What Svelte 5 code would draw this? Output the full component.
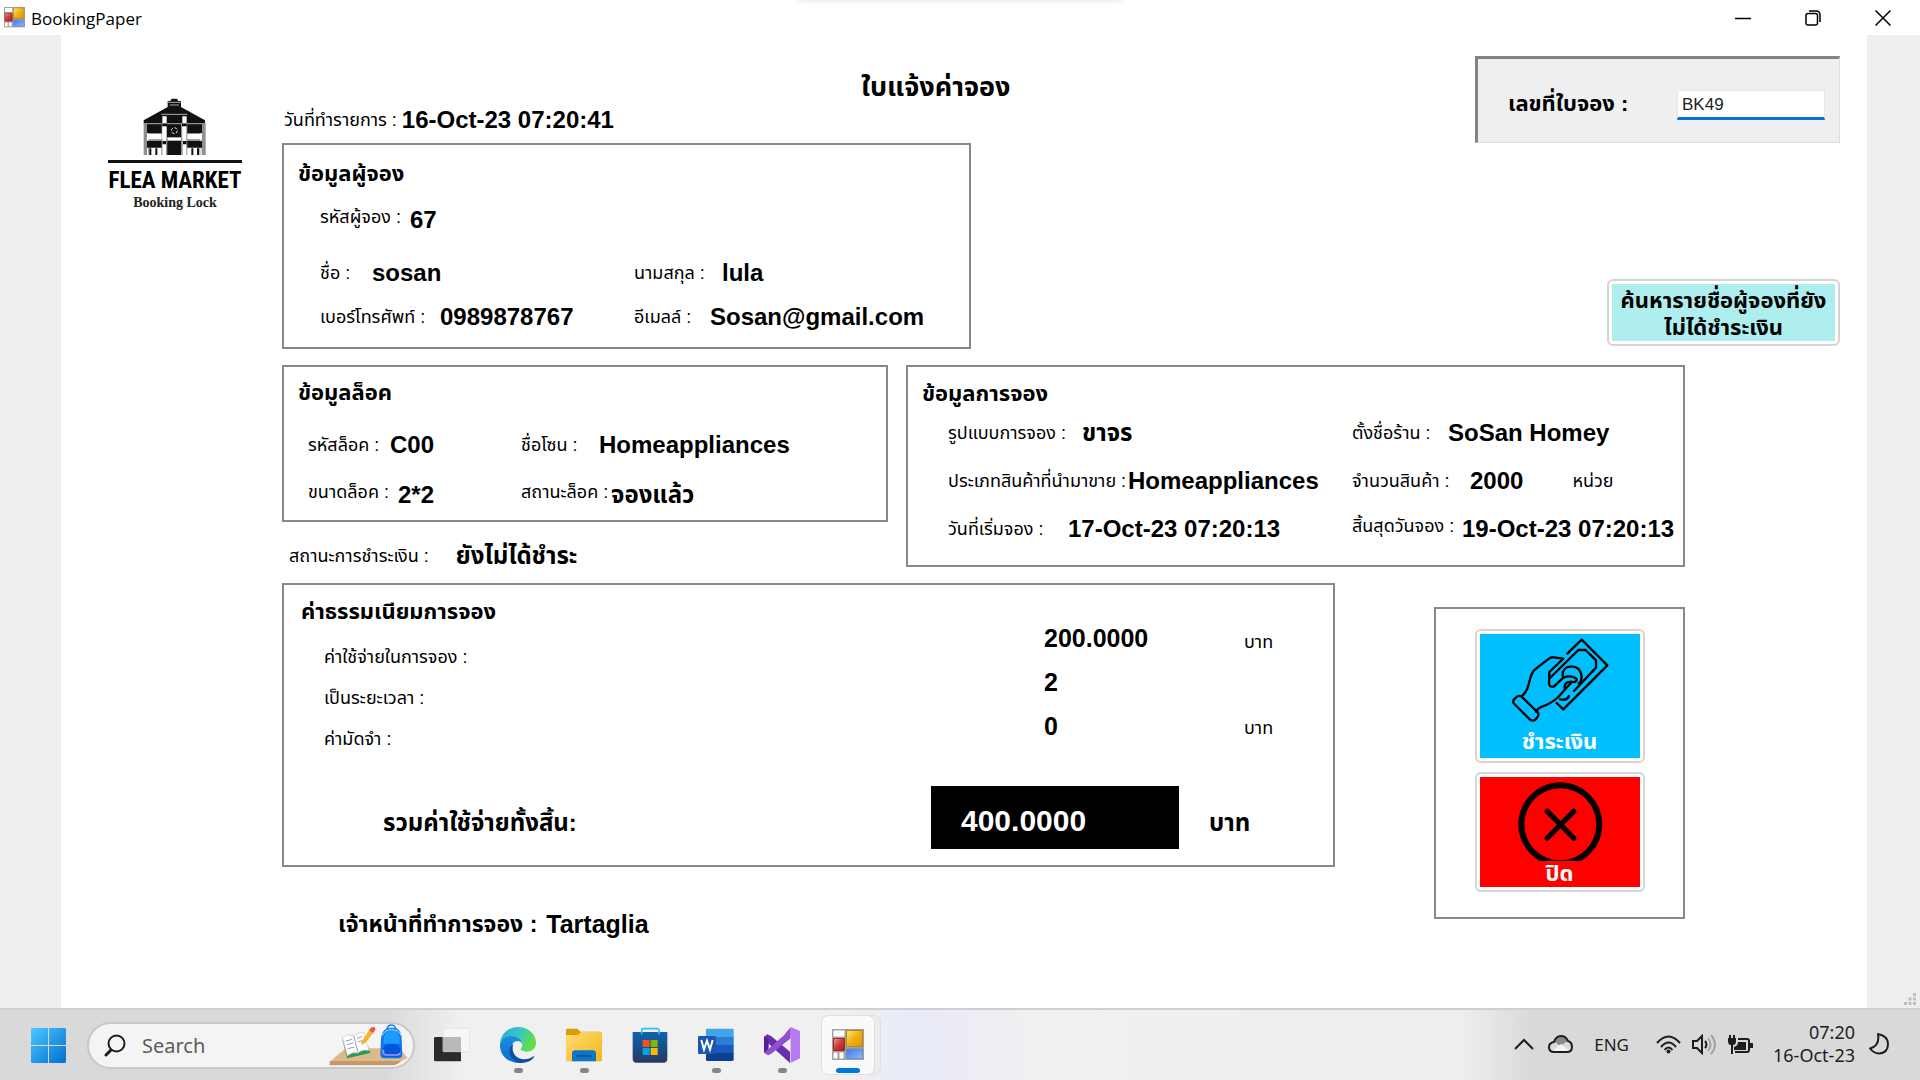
<script>
  const customer = [
    [{ label: 'รหัสผู้จอง :', value: '67', w: 'w90', lift: true }],
    [{ label: 'ชื่อ :', value: 'sosan', w: 'w52' }, { label: 'นามสกุล :', value: 'lula', w: 'w88' }],
    [{ label: 'เบอร์โทรศัพท์ :', value: '0989878767', w: 'w120' }, { label: 'อีเมลล์ :', value: 'Sosan@gmail.com', w: 'w76' }]
  ];
  const lock = [
    [{ label: 'รหัสล็อค :', value: 'C00', w: 'w82' }, { label: 'ชื่อโซน :', value: 'Homeappliances', w: 'w78' }],
    [{ label: 'ขนาดล็อค :', value: '2*2', w: 'w90', lift: true }, { label: 'สถานะล็อค :', value: 'จองแล้ว', w: 'w90', lift: true }]
  ];
  const booking = [
    [{ label: 'รูปแบบการจอง :', value: 'ขาจร', w: 'w134' }, { label: 'ตั้งชื่อร้าน :', value: 'SoSan Homey', w: 'w96' }],
    [{ label: 'ประเภทสินค้าที่นำมาขาย :', value: 'Homeappliances', w: 'w180' }, { label: 'จำนวนสินค้า :', value: '2000', w: 'w118', unit: 'หน่วย' }],
    [{ label: 'วันที่เริ่มจอง :', value: '17-Oct-23 07:20:13', w: 'w120' }, { label: 'สิ้นสุดวันจอง :', value: '19-Oct-23 07:20:13', w: 'w110', lift: true }]
  ];
  const feeLabels = ['ค่าใช้จ่ายในการจอง :', 'เป็นระยะเวลา :', 'ค่ามัดจำ :'];
  const feeValues = ['200.0000', '2', '0'];
  const feeUnits = ['บาท', '', 'บาท'];
  let slip = $state('BK49');
</script>

{#snippet formsIcon(size)}
  <svg width={size} height={size} viewBox="0 0 32 32" aria-hidden="true">
    <defs>
      <linearGradient id="fy{size}" x1="0" y1="0" x2="1" y2="1"><stop offset="0" stop-color="#ffe58a" /><stop offset=".5" stop-color="#eeb010" /><stop offset="1" stop-color="#d99a00" /></linearGradient>
      <linearGradient id="fr{size}" x1="0" y1="0" x2="1" y2="1"><stop offset="0" stop-color="#f0a09a" /><stop offset=".5" stop-color="#cc3a36" /><stop offset="1" stop-color="#a81c1c" /></linearGradient>
      <linearGradient id="fb{size}" x1="0" y1="0" x2="1" y2="1"><stop offset="0" stop-color="#3f78e8" /><stop offset="1" stop-color="#8fb8ff" /></linearGradient>
    </defs>
    <path fill="#a2a2a2" d="M0 0h32v31H0z" />
    <path fill="#fff" d="M1.500 1.500h11v6h-11zM1.500 23.500h4v6h-4zM7.500 23.500h4v6h-4z" />
    <path fill="url(#fy{size})" stroke="#b58716" d="M14.500 1.500h16v16h-16z" />
    <path fill="url(#fr{size})" stroke="#9a2a2a" d="M1.500 9.500h11v12h-11z" />
    <path fill="url(#fb{size})" stroke="#6d8fd0" d="M14.500 20h16v9.500h-16z" />
  </svg>
{/snippet}

{#snippet fields(rows)}
  {#each rows as row}
    <div class="pair">
      {#each row as f}
        <dl class="field" class:lift={f.lift}>
          <dt class={f.w}>{f.label}</dt>
          <dd>{f.value}</dd>
          {#if f.unit}<dd class="unit">{f.unit}</dd>{/if}
        </dl>
      {/each}
    </div>
  {/each}
{/snippet}

<div class="screen">
  <div class="flyout"></div>
  <header class="titlebar">
    {@render formsIcon(21)}
    <span class="caption">BookingPaper</span>
    <div class="winbtns">
      <button aria-label="Minimize"><svg width="16" height="16" viewBox="0 0 16 16"><path d="M0 8.500h16" /></svg></button>
      <button aria-label="Restore"><svg width="16" height="16" viewBox="0 0 16 16"><rect x="1" y="3.500" width="11.500" height="11.500" rx="2" /><path d="M4 1h7.500a3.500 3.500 0 0 1 3.500 3.500V12" /></svg></button>
      <button aria-label="Close"><svg width="16" height="16" viewBox="0 0 16 16"><path d="M.5.5l15 15M15.500.5l-15 15" /></svg></button>
    </div>
  </header>

  <main class="client">
    <div class="form">
      <div class="logo">
        <svg width="64" height="60" viewBox="160 52 192 176" aria-hidden="true">
          <path fill="#111" d="M234 62h8l4-7h16l4 7h8v18l72 40v8H162v-8l72-40z" />
          <path stroke="#aaa" stroke-width="3" fill="none" d="M234 66h40M240 74h28M215 102h78" />
          <path fill="#8f8f8f" d="M162 128h186v96h-12v-78h-4v78h-3v-24h-36v24h-4v-90h-10v90h-50v-90h-10v90h-4v-24h-36v24h-3v-78h-4v78h-10z" />
          <path fill="#111" d="M172 132h44v26h-44zM293 132h44v26h-44zM232 132h42v38h-42zM172 182h44v20h-44zM293 182h44v20h-44zM233 182h41v42h-41zM218 130h14v8h-14zM277 130h14v8h-14zM219 182h10v10h-10zM280 182h10v10h-10z" />
          <path fill="#fff" d="M218 108h13v20h-13zM278 108h13v20h-13zM218 140h12v40h-12zM278 140h12v40h-12zM172 161h44v16h-44zM293 161h44v16h-44zM234 172h40v8h-40zM219 194h10v32h-10zM280 194h10v32h-10z" />
          <path stroke="#111" stroke-width="6" d="M182 204v20M200 204v20M308 204v20M325 204v20" />
          <path stroke="#fff" stroke-width="6" d="M191 206v20M209 206v20M299 206v20M317 206v20" />
          <circle cx="254" cy="151" r="9" fill="none" stroke="#ddd" stroke-width="3" stroke-dasharray="9 5" />
        </svg>
        <span class="brand">FLEA MARKET</span>
        <span class="tag">Booking Lock</span>
      </div>

      <div class="content">
        <div class="top">
          <dl class="field made"><dt>วันที่ทำรายการ :</dt><dd>16-Oct-23 07:20:41</dd></dl>
          <h1>ใบแจ้งค่าจอง</h1>
          <div class="slip">
            <label for="slip">เลขที่ใบจอง :</label>
            <input id="slip" type="text" bind:value={slip} />
          </div>
        </div>

        <div class="people">
          <section class="box customer">
            <h2>ข้อมูลผู้จอง</h2>
            {@render fields(customer)}
          </section>
          <button class="raised find"><span>ค้นหารายชื่อผู้จองที่ยัง<br />ไม่ได้ชำระเงิน</span></button>
        </div>

        <div class="details">
          <div>
            <section class="box lock">
              <h2>ข้อมูลล็อค</h2>
              {@render fields(lock)}
            </section>
            <dl class="field status"><dt>สถานะการชำระเงิน :</dt><dd>ยังไม่ได้ชำระ</dd></dl>
          </div>
          <section class="box booking">
            <h2>ข้อมูลการจอง</h2>
            {@render fields(booking)}
          </section>
        </div>

        <div class="bottom">
          <div>
            <section class="box fees">
              <h2>ค่าธรรมเนียมการจอง</h2>
              <div class="feegrid">
                <div class="feelabels">{#each feeLabels as t}<span>{t}</span>{/each}</div>
                <div class="feevalues">{#each feeValues as t}<span>{t}</span>{/each}</div>
                <div class="feeunits">{#each feeUnits as t}<span>{t}</span>{/each}</div>
              </div>
              <div class="total">
                <span class="sum">รวมค่าใช้จ่ายทั้งสิ้น:</span>
                <output>400.0000</output>
                <span>บาท</span>
              </div>
            </section>
            <dl class="field officer"><dt>เจ้าหน้าที่ทำการจอง :</dt><dd>Tartaglia</dd></dl>
          </div>
          <section class="box actions">
            <button class="raised pay">
              <span>
                <svg width="100" height="87" viewBox="270 145 300 261" aria-hidden="true">
                  <g fill="none" stroke="#000" stroke-width="7" stroke-linecap="round" stroke-linejoin="round">
                    <path d="M283 331l8-7q8-5 15 1l46 45q6 7 1 14l-7 9q-8 6-16 0l-47-47q-7-8 0-15z" />
                    <path d="M306 322C326 304 324 290 332 265q5-18 16-25l36-28q9-7 17-6l29 4-42 40-1 35q3 13 15 8l28-26q14-6 26-3 18 4 13 13-3 4-14 3l-40 45q-21 19-39 25-23 7-28 19" />
                    <path d="M442 195l43-42 77 77-132 132-20-19" />
                    <path d="M390 268l85-84h22l31 31v22l-66 70" />
                    <path d="M428 262q-2-27 25-29 28 0 32 29 0 17-9 23" />
                    <path d="M434 299q-3-20 20-20M420 332q22 4 27-10" />
                  </g>
                </svg>
                ชำระเงิน
              </span>
            </button>
            <button class="raised close">
              <span>
                <svg width="86" height="79" viewBox="290 575 258 237" aria-hidden="true">
                  <circle cx="420" cy="702" r="117" fill="none" stroke="#000" stroke-width="18" />
                  <path stroke="#000" stroke-width="16" stroke-linecap="round" d="M381 663l79 80M460 663l-79 80" />
                </svg>
                ปิด
              </span>
            </button>
          </section>
        </div>
      </div>
    </div>
    <svg class="grip" width="13" height="13" viewBox="0 0 13 13" aria-hidden="true"><path fill="#bdbdbd" d="M9 0h3v3H9zM4.500 4.500h3v3h-3zM9 4.500h3v3H9zM0 9h3v3H0zM4.500 9h3v3h-3zM9 9h3v3H9z" /></svg>
  </main>

  <footer class="taskbar">
    <button class="start" aria-label="Start">
      <svg width="35" height="35" viewBox="0 0 35 35">
        <defs><linearGradient id="win" x1="0" y1="0" x2="1" y2="1" gradientUnits="objectBoundingBox"><stop offset="0" stop-color="#4cc8ff" /><stop offset="1" stop-color="#0070d0" /></linearGradient></defs>
        <path fill="url(#win)" d="M1 0h16v17H0V1zM18 0h16l1 1v16H18zM0 18h17v17H1l-1-1zM18 18h17v16l-1 1H18z" />
      </svg>
    </button>
    <label class="search">
      <svg width="22" height="23" viewBox="0 0 22 23"><circle cx="12.500" cy="9.500" r="8" fill="none" stroke="#1d1d1d" stroke-width="2" /><path stroke="#1d1d1d" stroke-width="3" stroke-linecap="round" d="M2 21l5-5" /></svg>
      <input type="text" placeholder="Search" aria-label="Search" />
      <svg class="scene" width="80" height="44" viewBox="0 0 240 132" aria-hidden="true">
        <path fill="#deb98c" d="M50 76h160l26 28-22 12H2z" />
        <path fill="#c49a6c" d="M2 114h214q-8 12-28 13H2z" />
        <path fill="#2f9a4e" d="M40 48l14 58 70-16-6-18z" />
        <path fill="#fff" stroke="#c9c9d5" stroke-width="2" d="M40 42q20-10 34-4 14-12 30-10l16 54q-22-4-33 8-16-5-32 8z" />
        <path stroke="#9c9cb8" stroke-width="3" fill="none" d="M50 54l20-5M53 65l20-5M56 77l20-5M84 46l16-5M87 57l16-5M74 38l13 50" />
        <path fill="#f7b52c" d="M98 56l22-34 12 9-24 30-12 5z" /><path fill="#ef5545" d="M120 22l7-9 9-1 4 7-8 12z" />
        <path fill="none" stroke="#1b86ec" stroke-width="5" d="M174 20q2-14 13-14t14 14" />
        <path fill="#0b78f0" d="M156 48q2-34 32-34t30 34l2 46q0 12-12 12h-42q-12 0-12-12z" />
        <path fill="#1b9bff" d="M164 44q3-22 24-22 22 0 24 22v18h-48z" />
        <path fill="#0057d8" d="M162 76q2-14 26-14 23 0 25 14v20q0 5-6 5h-38q-7 0-7-5z" />
        <path stroke="#b58cff" stroke-width="5" fill="none" d="M163 80v10q2 6 8 6h34q6 0 7-6" />
        <path stroke="#bde0ff" stroke-width="3" fill="none" d="M159 38q8-18 29-18t29 18" />
      </svg>
    </label>
    <nav class="apps">
      <button aria-label="Task view">
        <svg width="36" height="36" viewBox="0 0 108 108"><path fill="#2b2b2a" d="M3 30h78v73H5q-5 0-5-5V33z" /><rect x="27" y="4" width="80" height="70" rx="3" fill="#f6f6f6" stroke="#dcdcdc" stroke-width="2" /><path fill="#b9b9b9" d="M27 30h54v44H27z" /></svg>
      </button>
      <button aria-label="Edge" class="open">
        <svg width="36" height="36" viewBox="0 0 108 108">
          <defs>
            <linearGradient id="e1" x1="0" y1="0" x2="1" y2=".4"><stop offset="0" stop-color="#2aa6e8" /><stop offset=".55" stop-color="#3ac8c0" /><stop offset="1" stop-color="#63de4a" /></linearGradient>
            <linearGradient id="e2" x1="0" y1="0" x2="0" y2="1"><stop offset="0" stop-color="#1b90dc" /><stop offset="1" stop-color="#0a6cd0" /></linearGradient>
          </defs>
          <path fill="url(#e1)" d="M0 50C2 20 26 0 54 0c32 0 54 22 54 47 0 18-14 27-28 27-12 0-18-4-18-7s5-6 5-15c0-14-18-24-34-24C18 28 4 36 0 50z" />
          <path fill="url(#e2)" d="M0 52c4-18 18-25 33-25 18 0 33 10 34 24-3-6-8-9-14-9-12 0-19 10-19 24 0 20 16 36 34 41-38 6-70-20-68-55z" />
          <path fill="#104f9c" d="M40 51c-8 22 6 46 34 46 10 0 18-4 26-9 2-1 3 1 2 3-8 11-22 17-38 17-20-2-36-18-36-36 0-10 5-17 12-21z" />
        </svg>
      </button>
      <button aria-label="File Explorer" class="open">
        <svg width="36" height="36" viewBox="0 0 108 108">
          <defs><linearGradient id="fo" x1="0" y1="0" x2="1" y2="1"><stop offset="0" stop-color="#ffdc72" /><stop offset="1" stop-color="#f5b51c" /></linearGradient></defs>
          <path fill="#dc9c07" d="M0 9q0-4 4-4h30l10 9h60q4 0 4 4v20H0z" /><path fill="url(#fo)" d="M0 24h36l10-9h62v84q0 4-4 4H4q-4 0-4-4z" />
          <path fill="#0f73c6" d="M18 103V80q0-10 10-10h52q10 0 10 10v23z" /><path stroke="#0a4b8f" stroke-width="5" stroke-linecap="round" d="M34 87h40" />
        </svg>
      </button>
      <button aria-label="Store">
        <svg width="36" height="36" viewBox="0 0 108 108">
          <defs><linearGradient id="st" x1="0" y1="0" x2="0" y2="1"><stop offset="0" stop-color="#0f63b0" /><stop offset="1" stop-color="#243a60" /></linearGradient></defs>
          <path fill="url(#st)" d="M2 15h104v80q0 12-12 12H14Q2 107 2 95z" /><path fill="none" stroke="#2cc0f4" stroke-width="5" d="M29 22V10q0-5 5-5h42q5 0 5 5v12" />
          <path fill="#f25022" d="M32 39h21v21H32z" /><path fill="#7fba00" d="M56 39h21v21H56z" /><path fill="#00a4ef" d="M32 63h21v21H32z" /><path fill="#ffb900" d="M56 63h21v21H56z" />
        </svg>
      </button>
      <button aria-label="Word" class="open">
        <svg width="36" height="36" viewBox="0 0 108 108">
          <path fill="#41a5ee" d="M24 30V9q0-4 4-4h75q4 0 4 4v21z" /><path fill="#2b7cd3" d="M24 30h83v24H24z" /><path fill="#185abd" d="M24 54h83v24H24z" /><path fill="#103f91" d="M24 78h83v20q0 4-4 4H28q-4 0-4-4z" />
          <rect y="27" width="54" height="54" rx="4" fill="#1b56b4" />
          <path fill="none" stroke="#fff" stroke-width="6" d="M10 39l8 29 9-27 9 27 8-29" />
        </svg>
      </button>
      <button aria-label="Visual Studio" class="open">
        <svg width="36" height="36" viewBox="0 0 108 108">
          <path fill="#6a2fb0" d="M0 29l10-7 12 6 56 46v34L14 50v-2l-2 34-12-6z" />
          <path fill="#52218f" d="M0 29l13 6v42L0 76z" />
          <path fill="#8f4fd0" d="M0 77l60-52L80 0v34L22 80l-10 5z" />
          <path fill="#b57bee" d="M80 0l28 12v82L80 108z" />
        </svg>
      </button>
      <button aria-label="BookingPaper" class="open active">{@render formsIcon(32)}</button>
    </nav>
    <div class="tray">
      <svg width="20" height="12" viewBox="0 0 20 12"><path fill="none" stroke="#1d1d1d" stroke-width="2" d="M1 11l9-9 9 9" /></svg>
      <svg class="cloud" width="25" height="18" viewBox="0 0 25 18"><path fill="#8b8b8b" d="M6 6q2-5 7-5 5 0 7 5l-8 5z" /><path fill="#f3f3f3" d="M4 16l9-7 9 7z" /><path fill="none" stroke="#1d1d1d" stroke-width="2" d="M6 17q-5 0-5-5 0-4 5-5 2-6 7-6 5 0 7 5 4 1 4 6 0 5-5 5z" /></svg>
      <span class="lang">ENG</span>
      <svg width="25" height="19" viewBox="0 0 25 19"><g fill="none" stroke="#1d1d1d" stroke-width="2"><path d="M1 8q11.500-13 23 0M5 12q7.500-9 15 0M8.500 15q4-5 8 0" /></g><circle cx="12.500" cy="16.500" r="2" fill="#1d1d1d" /></svg>
      <svg class="sound" width="25" height="21" viewBox="0 0 25 21"><path fill="none" stroke="#1d1d1d" stroke-width="2" d="M1 7h4l5-5v17l-5-5H1zM13 7q3 3.500 0 7" /><path fill="none" stroke="#a5a5a5" stroke-width="2" d="M16 4q5 6.500 0 13M19 1q8 9.500 0 19" /></svg>
      <svg class="battery" width="25" height="19" viewBox="0 0 25 19"><path fill="none" stroke="#1d1d1d" stroke-width="2" d="M10 4h9q2 0 2 2v9q0 2-2 2H7" /><path fill="#1d1d1d" d="M10 7h8v8H6v-3q4-1 4-5zM22 8h3v5h-3zM0 3h8v3q0 4-3 4v9H3v-9Q0 10 0 6zM1 0h2v3H1zM5 0h2v3H5z" /></svg>
      <time>07:20<br />16-Oct-23</time>
      <svg width="20" height="22" viewBox="0 0 20 22"><path fill="none" stroke="#1d1d1d" stroke-width="2" stroke-linejoin="round" d="M9 1q10 2 10 10 0 9-9 9.500-5 0-9-5Q11 13 9 1z" /></svg>
    </div>
  </footer>
</div>

<style>
  :global(body) { margin: 0; }
  .screen { position: relative; min-height: 100vh; display: flex; flex-direction: column; background: #fff; color: #000; font-family: "Liberation Sans", "Noto Sans Thai", "Noto Sans", sans-serif; overflow: hidden; }
  h1, h2, dl, dd { margin: 0; }
  button { border: 0; padding: 0; background: none; font: inherit; color: inherit; }
  svg { display: block; flex: none; }
  .flyout { position: absolute; top: -10px; left: 50%; width: 328px; margin-left: -164px; height: 10px; border-radius: 8px; box-shadow: 0 0 6px #00000022; }

  .titlebar { height: 35px; display: flex; align-items: center; padding: 0 2px 0 4px; }
  .caption { margin-left: 6px; padding-top: 2px; font: 17px "Open Sans", "Noto Sans", sans-serif; }
  .winbtns { margin-left: auto; display: flex; }
  .winbtns button { width: 70px; height: 33px; display: grid; place-items: center; }
  .winbtns svg { fill: none; stroke: #000; stroke-width: 1.500; }

  .client { flex: 1; display: flex; position: relative; background: #efefef; padding: 0 53px 0 61px; }
  .grip { position: absolute; right: 3px; bottom: 2px; }
  .form { flex: 1; min-width: 0; display: flex; background: #fff; padding: 21px 27px 0 47px; }
  .logo { width: 134px; flex: none; padding-top: 41px; display: flex; flex-direction: column; align-items: center; }
  .brand { margin-top: 3px; width: 134px; border-top: 3px solid #111; padding-top: 4px; text-align: center; font: bold 23px/27px "Liberation Sans Narrow", "Roboto Condensed", sans-serif; white-space: nowrap; }
  .tag { font: bold 14px/18px "Liberation Serif", serif; color: #222; }
  .content { flex: 1; min-width: 0; margin-left: 40px; display: flex; flex-direction: column; }

  .top { display: grid; grid-template-columns: 579px 1fr 365px; }
  .made { align-self: end; height: 46px; padding-left: 2px; }
  .made dt { margin-right: 5px; }
  h1 { font-size: 27px; line-height: 34px; padding-top: 14px; white-space: nowrap; }
  .slip { height: 87px; box-sizing: border-box; background: #efefef; border: 1px solid #dedede; border-top: 3px solid #838383; border-left: 3px solid #838383; display: flex; align-items: center; justify-content: space-between; padding: 8px 14px 0 30px; font-weight: bold; font-size: 22px; }
  .slip input { width: 148px; height: 30px; box-sizing: border-box; border: 1px solid #e5e5e5; border-bottom: 3px solid #0a6fd0; padding: 2px 4px 0; background: #fff; font: 17px "Liberation Sans", sans-serif; color: #222; outline: 0; }

  .box { box-sizing: border-box; border: 2px solid #888; }
  h2 { font-size: 22px; line-height: 30px; white-space: nowrap; }
  .pair { display: grid; align-items: center; }
  .field { display: flex; align-items: center; white-space: nowrap; }
  .field.lift { align-items: flex-start; }
  dt { flex: none; font-size: 18px; line-height: 22px; }
  dd { font-size: 24px; line-height: 28px; font-weight: bold; }
  dd.unit { margin-left: 49px; font-size: 18px; font-weight: normal; }
  .w52 { width: 52px; } .w76 { width: 76px; } .w78 { width: 78px; } .w82 { width: 82px; } .w88 { width: 88px; } .w90 { width: 90px; }
  .w96 { width: 96px; } .w110 { width: 110px; } .w118 { width: 118px; } .w120 { width: 120px; } .w134 { width: 134px; } .w180 { width: 180px; }

  .people { display: flex; justify-content: space-between; align-items: flex-end; }
  .customer { width: 689px; height: 206px; padding: 14px 0 0 14px; }
  .customer .pair { grid-template-columns: 314px 1fr; height: 44px; padding-left: 22px; }
  .customer .pair:nth-of-type(1) { height: 62px; }
  .raised { background: #fff; border: 2px solid #d4d4d4; border-radius: 6px; padding: 3px; }
  .raised > span { display: flex; flex-direction: column; align-items: center; justify-content: center; gap: 5px; box-sizing: border-box; width: 100%; height: 100%; font-weight: bold; }
  .find { width: 233px; height: 67px; margin-bottom: 3px; font-size: 22px; line-height: 27px; }
  .find > span { display: block; padding-top: 3px; background: #aeeeee; text-align: center; white-space: nowrap; }

  .details { display: grid; grid-template-columns: 606fr 779fr; gap: 18px; margin: 16px 155px 0 0; }
  .lock { height: 157px; padding: 11px 0 0 14px; }
  .lock h2 { margin-bottom: 12px; }
  .lock .pair { grid-template-columns: 213px 1fr; height: 50px; padding-left: 10px; }
  .status { height: 23px; margin-top: 22px; padding-left: 7px; }
  .status dt { margin-right: 27px; }
  .booking { height: 202px; padding: 12px 0 0 14px; }
  .booking .pair { grid-template-columns: 404px 1fr; height: 48px; padding-left: 26px; }

  .bottom { display: grid; grid-template-columns: 1053fr 251fr; gap: 99px; margin: 16px 155px 0 0; }
  .fees { height: 284px; padding: 12px 0 0 17px; }
  .feegrid { display: grid; grid-template-columns: 743px 200px 1fr; height: 145px; align-items: start; }
  .feegrid span { display: block; }
  .feelabels { padding: 10px 0 0 23px; font-size: 18px; line-height: 41px; }
  .feevalues { font-size: 25px; line-height: 44px; font-weight: bold; margin-top: -11px; }
  .feeunits { font-size: 18px; line-height: 43px; margin-top: -6px; }
  .feeunits span { height: 43px; }
  .total { display: flex; align-items: center; height: 63px; margin-top: 14px; padding-left: 82px; font-weight: bold; font-size: 24px; }
  .total span { padding-top: 12px; }
  .sum { width: 548px; }
  output { width: 248px; height: 63px; box-sizing: border-box; padding: 7px 0 0 30px; margin-right: 30px; background: #000; color: #fff; font-size: 30px; line-height: 56px; }
  .officer { margin-top: 42px; padding-left: 56px; }
  .officer dt { font-size: 23px; line-height: 30px; font-weight: bold; margin-right: 9px; }
  .officer dd { font-size: 25px; }
  .actions { height: 312px; margin-top: 24px; display: flex; flex-direction: column; align-items: center; gap: 9px; padding-top: 20px; color: #fff; font-size: 22px; line-height: 26px; }
  .pay { width: 170px; height: 134px; }
  .pay > span { background: #00bfff; }
  .close { width: 170px; height: 120px; }
  .close > span { gap: 0; padding-top: 4px; background: #f00; }

  .taskbar { height: 72px; box-sizing: border-box; border-top: 2px solid #cfcfcf; display: flex; align-items: center; padding: 0 31px; background: linear-gradient(90deg, #d9d9d9 0, #d9d9d9 20%, #f0f0f0 24%, #f0f0f0 44%, #e9ebf8 47%, #eaebf7 49%, #f0f0f0 54%, #eee 76%, #d9d9d9 80%); font-family: "Noto Sans", "Open Sans", sans-serif; }
  .search { display: flex; align-items: center; width: 328px; height: 47px; box-sizing: border-box; border: 2px solid #c8c8c8; border-radius: 24px; background: #f4f4f4; margin-left: 21px; padding-left: 15px; overflow: hidden; }
  .search input { flex: 1; min-width: 0; border: 0; outline: 0; background: none; padding: 0; margin-left: 16px; font: 20px "Noto Sans", "Open Sans", sans-serif; }
  .search input::placeholder { color: #5c5c5c; opacity: 1; }
  .scene { margin-right: 4px; }
  .apps { display: flex; gap: 14px; margin-left: 11px; }
  .apps button { position: relative; width: 52px; height: 58px; display: grid; place-items: center; border-radius: 6px; }
  .apps .open::after { content: ""; position: absolute; bottom: 1px; left: 22px; width: 9px; height: 5px; border-radius: 3px; background: #868686; }
  .apps .active { background: #fafafa; box-shadow: 0 0 0 1px #dfdfdf, 6px 0 0 #ececec, 6px 0 0 1px #e0e0e0; }
  .apps .active::after { left: 14px; width: 24px; background: #0078d4; }
  .tray { margin-left: auto; display: flex; align-items: center; color: #1d1d1d; font-size: 17px; padding-bottom: 2px; }
  .cloud { margin-left: 14px; }
  .lang { margin: 0 27px 0 21px; }
  .sound, .battery { margin-left: 11px; }
  time { width: 84px; margin: 0 14px 0 18px; text-align: right; font-size: 18px; line-height: 23px; white-space: nowrap; }
</style>
